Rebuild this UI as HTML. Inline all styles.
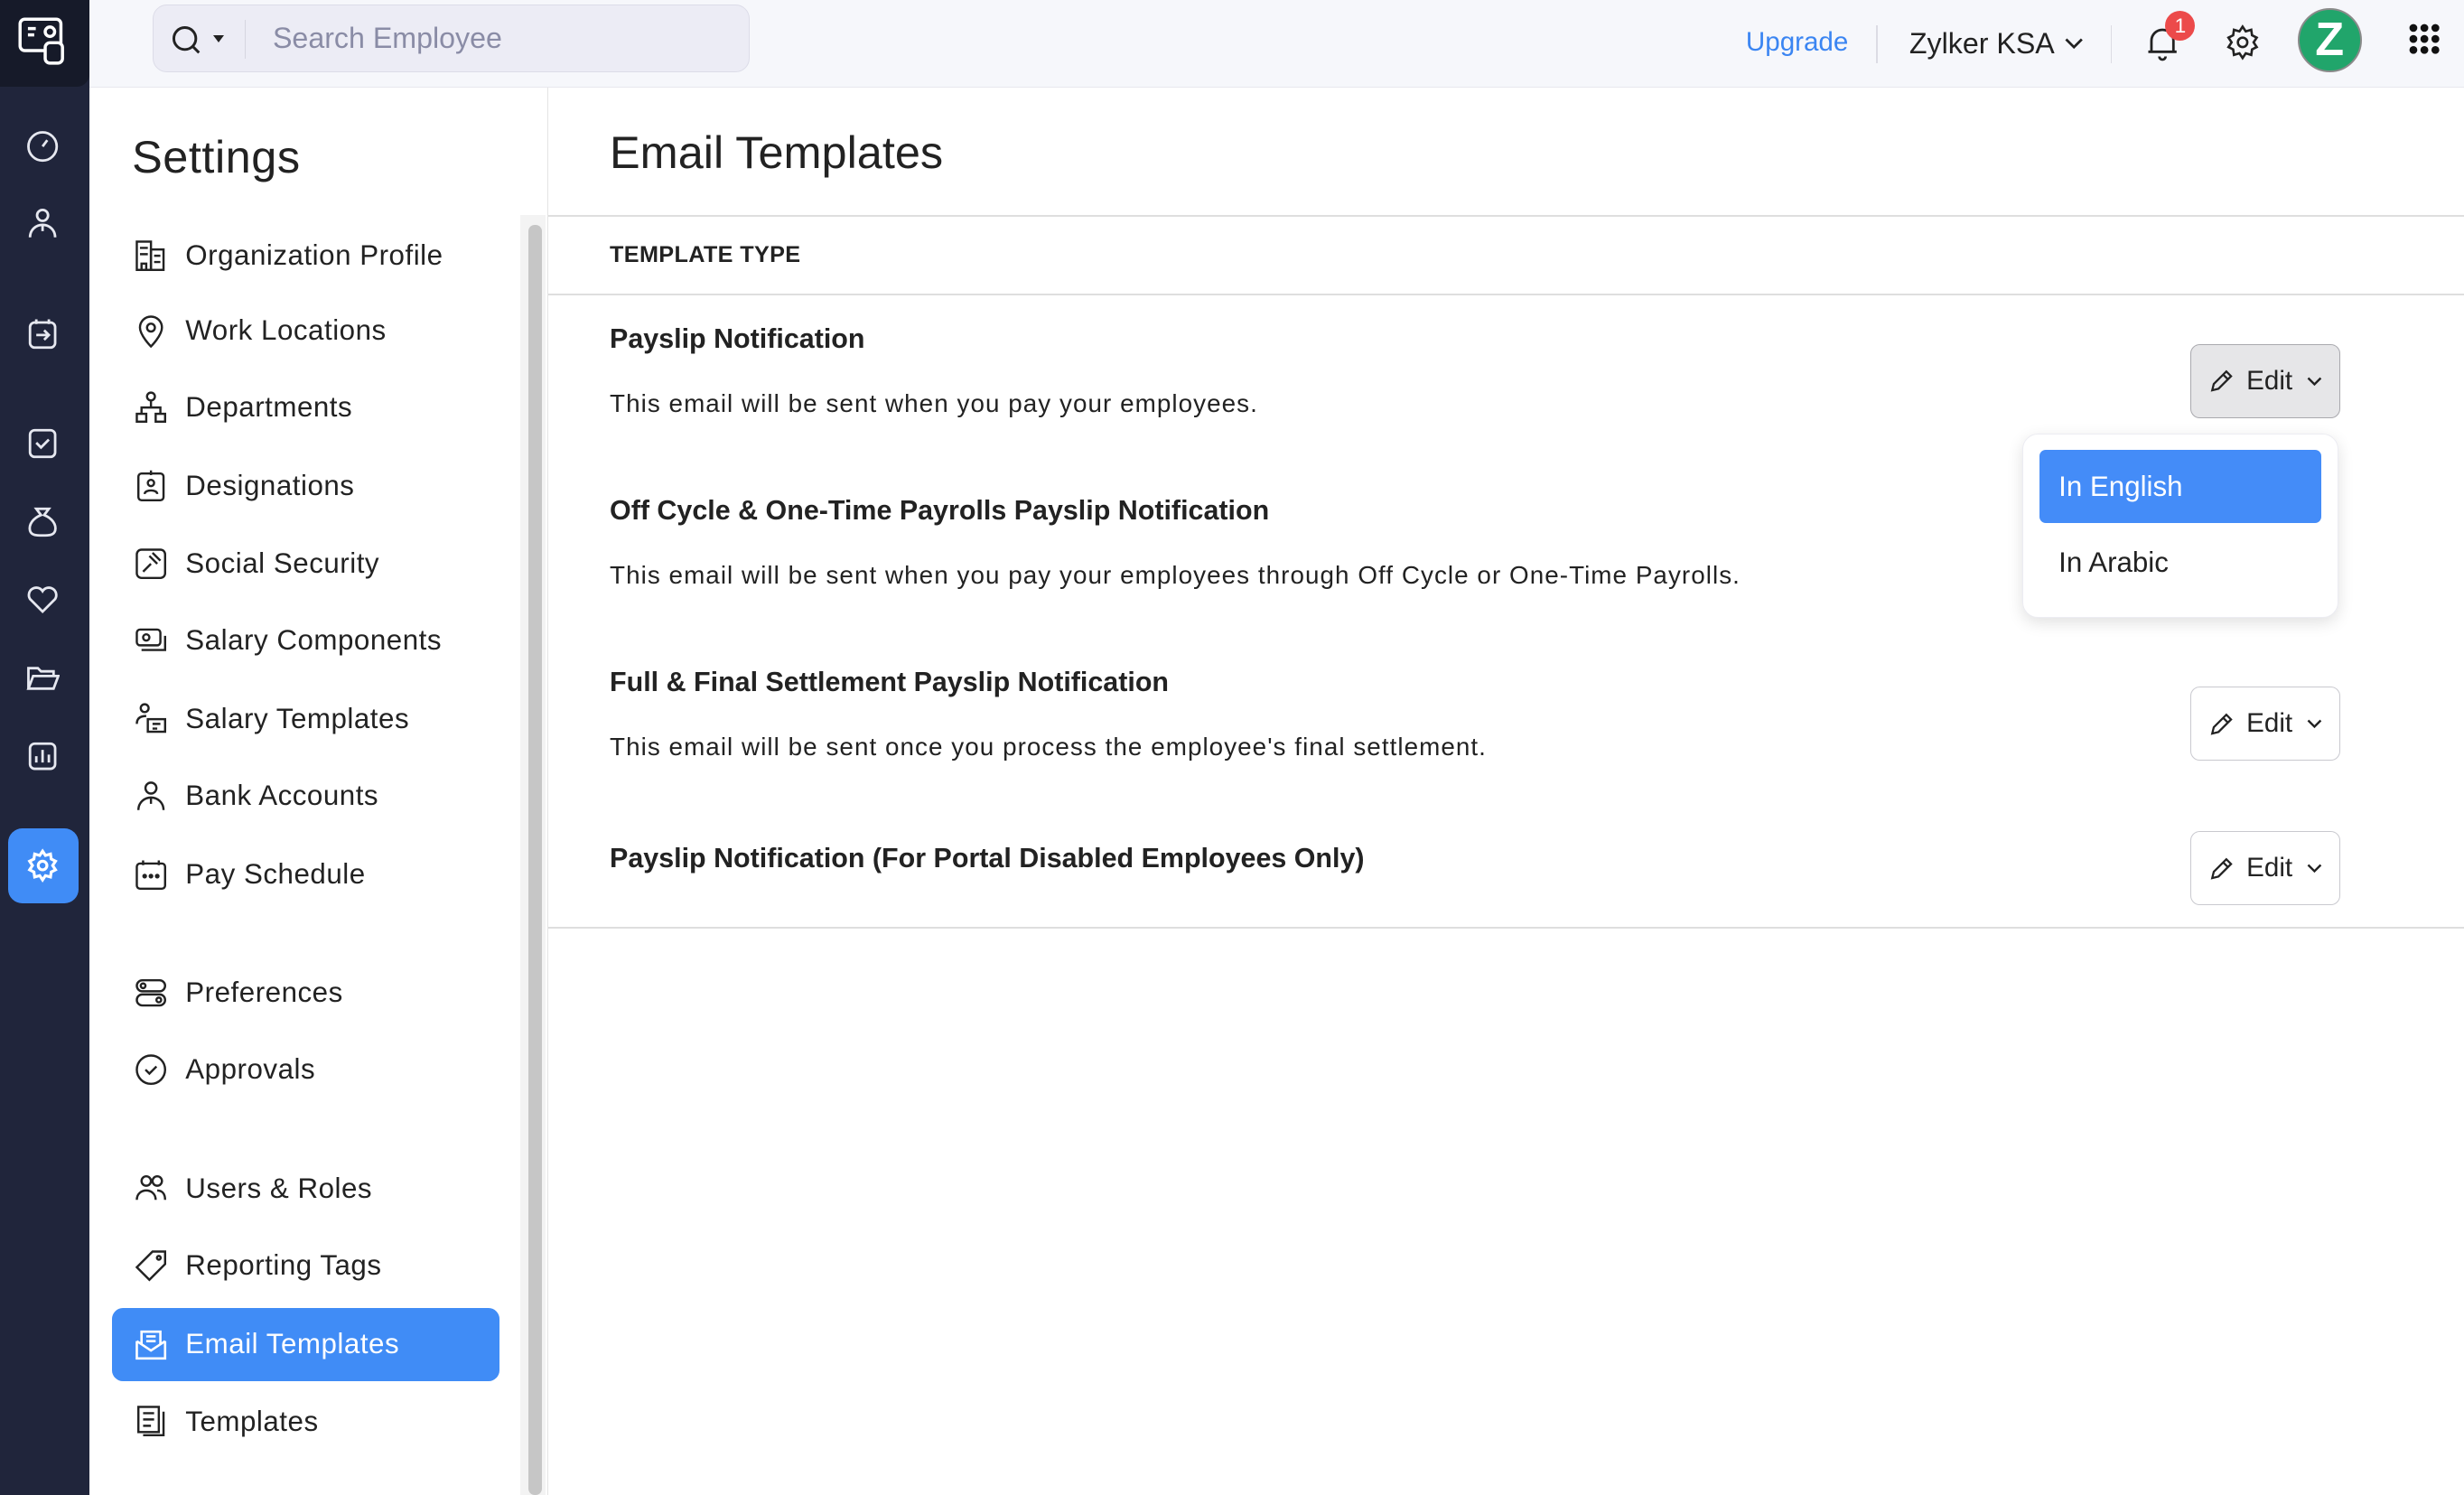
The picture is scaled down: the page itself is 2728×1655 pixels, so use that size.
<!DOCTYPE html>
<html><head><meta charset="utf-8"><style>
html{zoom:1.7398}
*{box-sizing:border-box;margin:0;padding:0}
body{width:1568px;height:951px;overflow:hidden;font-family:"Liberation Sans",sans-serif;color:#222;background:#fff;position:relative}
.abs{position:absolute}
.rail{left:0;top:0;width:57px;height:951px;background:#20253b}
.logo{left:0;top:0;width:57px;height:55px;background:#161a29;border-bottom-right-radius:8px}
.top{left:57px;top:0;width:1511px;height:56px;background:#f6f7fb;border-bottom:1px solid #e8e8ee}
.search{left:97px;top:3px;width:380px;height:43px;background:#ececf5;border:1px solid #dcdce8;border-radius:9px}
.side{left:57px;top:56px;width:292px;height:895px;border-right:1px solid #e4e4e4;background:#fff}
.item{position:absolute;left:71px;width:247px;height:47px;display:flex;align-items:center;font-size:18px;color:#222;letter-spacing:.3px}
.item svg{position:absolute;left:14px;width:22px;height:22px}
.item span{position:absolute;left:47px}
.item.act{background:#408cf6;border-radius:7px;color:#fff}
.line{position:absolute;left:349px;width:1219px;height:1px;background:#dedede}
.t{position:absolute;left:388px;font-size:17.5px;font-weight:bold;color:#222}
.d{position:absolute;left:388px;font-size:16px;color:#222;letter-spacing:.6px}
.edit{position:absolute;left:1394px;width:95px;height:47px;border:1px solid #c9c9cf;border-radius:6px;background:#fff;font-size:17px;display:flex;align-items:center}
.edit span{position:absolute;left:35px}
</style></head><body>
<div class="abs rail"></div>
<div class="abs logo"><svg style="position:absolute;left:10px;top:9px" width="34" height="34" viewBox="0 0 34 34" fill="none" stroke="#fff" stroke-width="2"><rect x="3" y="3" width="26" height="20" rx="3"/><path d="M8 9h5M8 13h4"/><circle cx="22" cy="11" r="3"/><rect x="19" y="18" width="11" height="13" rx="3" fill="#161a29"/></svg></div>
<svg class="abs" style="left:16px;top:82px" width="22" height="22" viewBox="0 0 22 22" fill="none" stroke="#e6e8f0" stroke-width="1.6"><circle cx="11" cy="11" r="9"/><path d="M11 11l3-4"/></svg>
<svg class="abs" style="left:16px;top:131px" width="22" height="22" viewBox="0 0 22 22" fill="none" stroke="#e6e8f0" stroke-width="1.6"><circle cx="11" cy="6" r="3.5"/><path d="M3 20c0-5 4-8 8-8s8 3 8 8M11 12v4"/></svg>
<svg class="abs" style="left:16px;top:201px" width="22" height="22" viewBox="0 0 22 22" fill="none" stroke="#e6e8f0" stroke-width="1.6"><rect x="3" y="4" width="16" height="16" rx="3"/><path d="M7 2v3M15 2v3M7 12h8M12 9l3 3-3 3"/></svg>
<svg class="abs" style="left:16px;top:271px" width="22" height="22" viewBox="0 0 22 22" fill="none" stroke="#e6e8f0" stroke-width="1.6"><rect x="3" y="3" width="16" height="17" rx="3"/><path d="M7 11l3 3 5-5"/></svg>
<svg class="abs" style="left:16px;top:321px" width="22" height="22" viewBox="0 0 22 22" fill="none" stroke="#e6e8f0" stroke-width="1.6"><path d="M7 3h8l-3 4c5 2 8 6 7 10-1 3-4 3-8 3s-7 0-8-3c-1-4 2-8 7-10z"/></svg>
<svg class="abs" style="left:16px;top:370px" width="22" height="22" viewBox="0 0 22 22" fill="none" stroke="#e6e8f0" stroke-width="1.6"><path d="M11 19L3 11a4.5 4.5 0 018-5 4.5 4.5 0 018 5z"/></svg>
<svg class="abs" style="left:16px;top:420px" width="22" height="22" viewBox="0 0 22 22" fill="none" stroke="#e6e8f0" stroke-width="1.6"><path d="M2 18V5h6l2 2h8v3M2 18l3-8h16l-3 8z"/></svg>
<svg class="abs" style="left:16px;top:470px" width="22" height="22" viewBox="0 0 22 22" fill="none" stroke="#e6e8f0" stroke-width="1.6"><rect x="3" y="3" width="16" height="16" rx="3"/><path d="M7 15v-4M11 15V7M15 15v-5"/></svg>
<div class="abs" style="left:5px;top:527px;width:45px;height:48px;background:#408cf6;border-radius:9px"></div>
<svg class="abs" style="left:16px;top:540px" width="22" height="22" viewBox="0 0 24 24" fill="none" stroke="#fff" stroke-width="2"><circle cx="12" cy="12" r="3"/><path d="M12 2l2 3 3.5-1 .5 3.5L21 9l-2 3 2 3-3 1.5-.5 3.5L14 19l-2 3-2-3-3.5 1-.5-3.5L3 15l2-3-2-3 3-1.5L6.5 4 10 5z"/></svg>

<div class="abs top"></div>
<div class="abs search">
<svg style="position:absolute;left:11px;top:12px" width="20" height="20" viewBox="0 0 20 20" fill="none" stroke="#222" stroke-width="1.7"><circle cx="9" cy="9" r="7"/><path d="M14 14l4 4"/></svg>
<div style="position:absolute;left:38px;top:19px;border:4px solid transparent;border-top:5px solid #222"></div>
<div style="position:absolute;left:58px;top:9px;width:1px;height:25px;background:#d6d6e0"></div>
<div style="position:absolute;left:76px;top:10px;font-size:18.5px;color:#8a8ca6">Search Employee</div>
</div>
<div class="abs" style="left:1111px;top:17px;font-size:17px;color:#3b85f2">Upgrade</div>
<div class="abs" style="left:1194px;top:16px;width:1px;height:24px;background:#dcdce4"></div>
<div class="abs" style="left:1215px;top:17px;font-size:18.5px;color:#222">Zylker KSA</div>
<svg class="abs" style="left:1313px;top:23px" width="14" height="10" viewBox="0 0 14 10" fill="none" stroke="#222" stroke-width="1.6"><path d="M2 2l5 5 5-5"/></svg>
<div class="abs" style="left:1343px;top:16px;width:1px;height:24px;background:#dcdce4"></div>
<svg class="abs" style="left:1365px;top:15px" width="22" height="24" viewBox="0 0 22 24" fill="none" stroke="#222" stroke-width="1.6"><path d="M4 18V11a7 7 0 0114 0v7zM2 18h18M9 21a2 2 0 004 0"/></svg>
<div class="abs" style="left:1378px;top:7px;width:19px;height:19px;border-radius:50%;background:#ec4a4a;color:#fff;font-size:13px;text-align:center;line-height:19px">1</div>
<svg class="abs" style="left:1415px;top:15px" width="24" height="24" viewBox="0 0 24 24" fill="none" stroke="#222" stroke-width="1.5"><circle cx="12" cy="12" r="3"/><path d="M12 2l2 3 3.5-1 .5 3.5L21 9l-2 3 2 3-3 1.5-.5 3.5L14 19l-2 3-2-3-3.5 1-.5-3.5L3 15l2-3-2-3 3-1.5L6.5 4 10 5z"/></svg>
<div class="abs" style="left:1462px;top:5px;width:41px;height:41px;border-radius:50%;background:#21a56b;border:1.5px solid #8a8a8a;color:#fff;font-weight:bold;font-size:30px;text-align:center;line-height:38px">Z</div>
<svg class="abs" style="left:1532px;top:14px" width="22" height="22" viewBox="0 0 22 22" fill="#111"><circle cx="4" cy="4" r="2.5"/><circle cx="11" cy="4" r="2.5"/><circle cx="18" cy="4" r="2.5"/><circle cx="4" cy="11" r="2.5"/><circle cx="11" cy="11" r="2.5"/><circle cx="18" cy="11" r="2.5"/><circle cx="4" cy="18" r="2.5"/><circle cx="11" cy="18" r="2.5"/><circle cx="18" cy="18" r="2.5"/></svg>

<div class="abs side"></div>
<div class="abs" style="left:84px;top:83px;font-size:29px;color:#222;letter-spacing:.3px">Settings</div>
<div class="abs" style="left:331px;top:137px;width:16px;height:814px;background:#f3f3f3"></div>
<div class="abs" style="left:336px;top:143px;width:9px;height:808px;background:#c6c6c6;border-radius:4px"></div>

<div class="item" style="top:139px"><svg viewBox="0 0 22 22" fill="none" stroke="#222" stroke-width="1.4"><rect x="2" y="2" width="9" height="18"/><rect x="11" y="7" width="8" height="13"/><path d="M4 6h5M4 10h5M13 11h4M13 15h4M5 20v-4h3v4"/></svg><span>Organization Profile</span></div>
<div class="item" style="top:187px"><svg viewBox="0 0 22 22" fill="none" stroke="#222" stroke-width="1.4"><path d="M11 21s-7-7-7-12a7 7 0 0114 0c0 5-7 12-7 12z"/><circle cx="11" cy="9" r="2.5"/></svg><span>Work Locations</span></div>
<div class="item" style="top:236px"><svg viewBox="0 0 22 22" fill="none" stroke="#222" stroke-width="1.4"><circle cx="11" cy="4" r="2.5"/><rect x="2" y="15" width="6" height="5"/><rect x="14" y="15" width="6" height="5"/><path d="M11 7v4M5 15v-4h12v4"/></svg><span>Departments</span></div>
<div class="item" style="top:286px"><svg viewBox="0 0 22 22" fill="none" stroke="#222" stroke-width="1.4"><rect x="3" y="3" width="16" height="17" rx="2"/><circle cx="11" cy="9" r="2"/><path d="M7 16c0-3 8-3 8 0M11 1v3"/></svg><span>Designations</span></div>
<div class="item" style="top:335px"><svg viewBox="0 0 22 22" fill="none" stroke="#222" stroke-width="1.4"><rect x="2" y="2" width="18" height="18" rx="3"/><path d="M6 16l5-5M10 6l5 5M12 4l5 5"/></svg><span>Social Security</span></div>
<div class="item" style="top:384px"><svg viewBox="0 0 22 22" fill="none" stroke="#222" stroke-width="1.4"><rect x="2" y="4" width="15" height="10" rx="2"/><path d="M5 17h15v-9"/><circle cx="8" cy="9" r="2"/></svg><span>Salary Components</span></div>
<div class="item" style="top:434px"><svg viewBox="0 0 22 22" fill="none" stroke="#222" stroke-width="1.4"><circle cx="7" cy="4" r="2.5"/><path d="M2 14c0-4 3-5 6-5"/><rect x="9" y="11" width="11" height="8"/><path d="M12 14h5M12 17h3"/></svg><span>Salary Templates</span></div>
<div class="item" style="top:483px"><svg viewBox="0 0 22 22" fill="none" stroke="#222" stroke-width="1.4"><circle cx="11" cy="6" r="3.5"/><path d="M3 20c0-5 4-8 8-8s8 3 8 8M11 12v4"/></svg><span>Bank Accounts</span></div>
<div class="item" style="top:533px"><svg viewBox="0 0 22 22" fill="none" stroke="#222" stroke-width="1.4"><rect x="2" y="4" width="18" height="16" rx="2"/><path d="M6 2v3M16 2v3"/><circle cx="7" cy="12" r=".8" fill="#222"/><circle cx="11" cy="12" r=".8" fill="#222"/><circle cx="15" cy="12" r=".8" fill="#222"/></svg><span>Pay Schedule</span></div>
<div class="item" style="top:608px"><svg viewBox="0 0 22 22" fill="none" stroke="#222" stroke-width="1.4"><rect x="2" y="3" width="18" height="7" rx="3.5"/><rect x="2" y="12" width="18" height="7" rx="3.5"/><circle cx="6" cy="6.5" r="1.5"/><circle cx="16" cy="15.5" r="1.5"/></svg><span>Preferences</span></div>
<div class="item" style="top:657px"><svg viewBox="0 0 22 22" fill="none" stroke="#222" stroke-width="1.4"><circle cx="11" cy="11" r="9"/><path d="M7.5 11l2.5 2.5 4.5-4.5"/></svg><span>Approvals</span></div>
<div class="item" style="top:733px"><svg viewBox="0 0 22 22" fill="none" stroke="#222" stroke-width="1.4"><circle cx="8" cy="6" r="3"/><circle cx="15" cy="6" r="3"/><path d="M2 18c0-4 3-6 6-6s6 2 6 6M15 12c3 0 5 2 5 6"/></svg><span>Users &amp; Roles</span></div>
<div class="item" style="top:782px"><svg viewBox="0 0 22 22" fill="none" stroke="#222" stroke-width="1.4"><path d="M12 2h8v8L10 20 2 12z"/><circle cx="16" cy="6" r="1.2"/></svg><span>Reporting Tags</span></div>
<div class="item act" style="top:832px"><svg viewBox="0 0 22 22" fill="none" stroke="#fff" stroke-width="1.5"><path d="M2 9v11h18V9M2 9l9 6 9-6M5 11V3h12v8M8 6h6M8 9h6"/></svg><span>Email Templates</span></div>
<div class="item" style="top:881px"><svg viewBox="0 0 22 22" fill="none" stroke="#222" stroke-width="1.4"><rect x="3" y="2" width="13" height="16"/><path d="M6 20h13V5M6 6h7M6 10h7M6 14h5"/></svg><span>Templates</span></div>

<div class="abs" style="left:388px;top:80px;font-size:29px;color:#222">Email Templates</div>
<div class="line" style="top:137px"></div>
<div class="abs" style="left:388px;top:154px;font-size:14.5px;font-weight:bold;color:#222;letter-spacing:.2px">TEMPLATE TYPE</div>
<div class="line" style="top:187px"></div>
<div class="t" style="top:206px">Payslip Notification</div>
<div class="d" style="top:248px">This email will be sent when you pay your employees.</div>
<div class="t" style="top:315px">Off Cycle &amp; One-Time Payrolls Payslip Notification</div>
<div class="d" style="top:357px">This email will be sent when you pay your employees through Off Cycle or One-Time Payrolls.</div>
<div class="t" style="top:424px">Full &amp; Final Settlement Payslip Notification</div>
<div class="d" style="top:466px">This email will be sent once you process the employee's final settlement.</div>
<div class="t" style="top:536px">Payslip Notification (For Portal Disabled Employees Only)</div>
<div class="line" style="top:590px"></div>

<div class="edit" style="top:219px;background:#e6e6e8;border-color:#a9a9ae"><svg style="position:absolute;left:10px" width="18" height="18" viewBox="0 0 18 18" fill="none" stroke="#222" stroke-width="1.3"><path d="M3 15l1-4 8-8 3 3-8 8zM10 5l3 3"/></svg><span>Edit</span><svg style="position:absolute;left:72px" width="12" height="8" viewBox="0 0 12 8" fill="none" stroke="#222" stroke-width="1.4"><path d="M2 2l4 4 4-4"/></svg></div>
<div class="edit" style="top:437px"><svg style="position:absolute;left:10px" width="18" height="18" viewBox="0 0 18 18" fill="none" stroke="#222" stroke-width="1.3"><path d="M3 15l1-4 8-8 3 3-8 8zM10 5l3 3"/></svg><span>Edit</span><svg style="position:absolute;left:72px" width="12" height="8" viewBox="0 0 12 8" fill="none" stroke="#222" stroke-width="1.4"><path d="M2 2l4 4 4-4"/></svg></div>
<div class="edit" style="top:529px"><svg style="position:absolute;left:10px" width="18" height="18" viewBox="0 0 18 18" fill="none" stroke="#222" stroke-width="1.3"><path d="M3 15l1-4 8-8 3 3-8 8zM10 5l3 3"/></svg><span>Edit</span><svg style="position:absolute;left:72px" width="12" height="8" viewBox="0 0 12 8" fill="none" stroke="#222" stroke-width="1.4"><path d="M2 2l4 4 4-4"/></svg></div>

<div class="abs" style="left:1287px;top:276px;width:201px;height:117px;background:#fff;border:1px solid #ececf2;border-radius:10px;box-shadow:0 3px 10px rgba(0,0,0,.12)"></div>
<div class="abs" style="left:1298px;top:286px;width:179px;height:47px;background:#448cf8;border-radius:4px;color:#fff;font-size:18px;line-height:47px;padding-left:12px">In English</div>
<div class="abs" style="left:1310px;top:348px;font-size:18px;color:#222">In Arabic</div>
</body></html>
